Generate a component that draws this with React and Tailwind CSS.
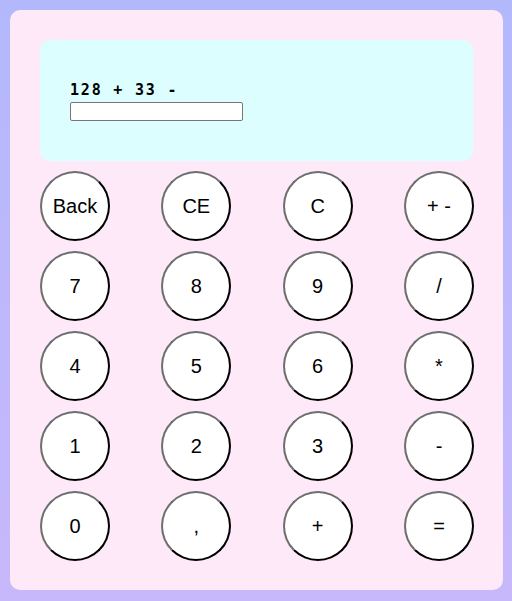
import React from "react";

const rows = [
  ["Back", "CE", "C", "+ -"],
  ["7", "8", "9", "/"],
  ["4", "5", "6", "*"],
  ["1", "2", "3", "-"],
  ["0", ",", "+", "="],
];

export default function App() {
  return (
    <div className="w-[512px] h-[601px] p-[10px] bg-gradient-to-b from-[#b3b8fc] to-[#c7b8fb]" style={{ fontFamily: '"Liberation Sans", Arial, sans-serif' }}>
      <div className="w-[493px] h-[580px] rounded-[10px] bg-[#fde9f8] pl-[30px] pt-[30px]">
        <div className="w-[433px] h-[121px] rounded-[10px] bg-[#dcfefe] pl-[30px] flex flex-col justify-center pt-[2px]">
          <div className="text-[15px] leading-[17px] font-bold tracking-[1.8px] text-black mb-[3px]" style={{ fontFamily: '"DejaVu Sans Mono", monospace' }}>
            128 + 33 -
          </div>
          <input
            type="text"
            className="w-[173px] h-[19px] border border-[#767676] rounded-[2px] bg-white text-[13px] px-[2px] outline-none"
          />
        </div>
        <div className="w-[434px] flex flex-col gap-[10px] mt-[10px]">
          {rows.map((row, r) => (
            <div key={r} className="flex justify-between">
              {row.map((k) => (
                <div
                  key={k}
                  className="w-[70px] h-[70px] rounded-full bg-white border-2 border-t-[#6e6e6e] border-l-[#6e6e6e] border-b-black border-r-black flex items-center justify-center text-[20px] text-black"
                >
                  {k}
                </div>
              ))}
            </div>
          ))}
        </div>
      </div>
    </div>
  );
}
